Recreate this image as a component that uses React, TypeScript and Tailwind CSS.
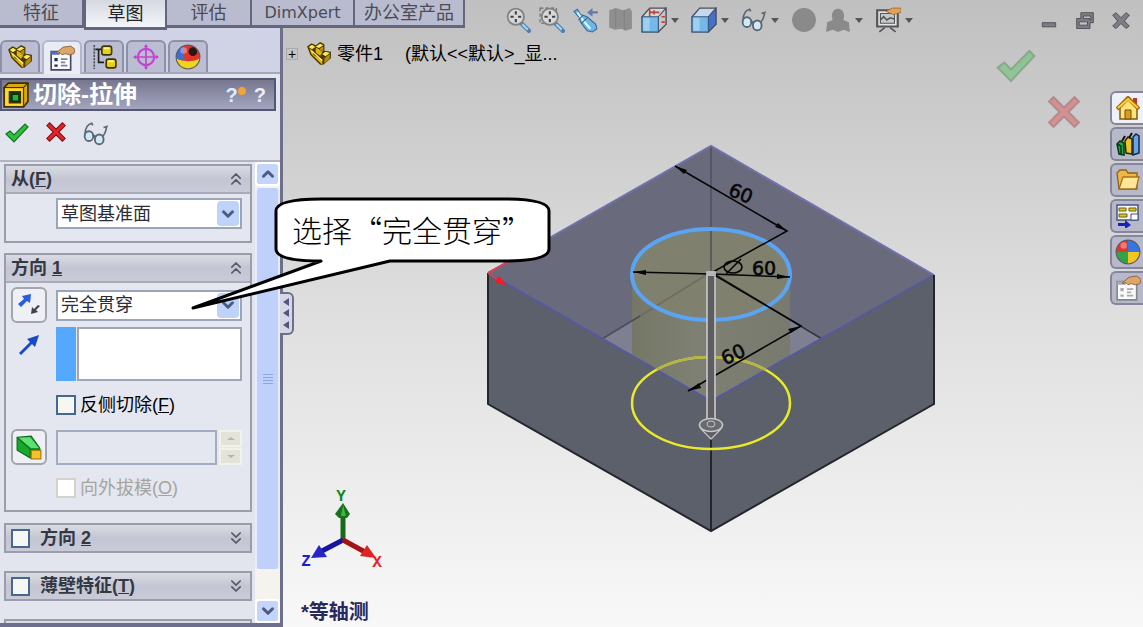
import { ReactNode } from "react";
import { ChevronDown, ChevronUp, ChevronsDown, ChevronsUp } from "lucide-react";

type IconProps = { children: ReactNode; className?: string };

function Icon({ children, className = "size-6" }: IconProps) {
  return (
    <svg viewBox="0 0 24 24" className={`shrink-0 ${className}`} fill="none" aria-hidden="true">
      {children}
    </svg>
  );
}

function PartIcon() {
  return (
    <Icon className="size-[26px]">
      <path d="M1 5l4-3 4 2 4-3 4 2v6l6 1v6l-7 6h-3L4 13z" fill="#4a3900" />
      <path d="M2.500 5.500l3-2 3 2-3 2zM9 5l4-2.500 3 1.500-4 2.500zM15 12l3-2 4 1-4 3z" fill="#ffe95a" />
      <path d="M3 7l3 2 1 4 8 4v5L5 12zM9 6l3 1.500 3 3-2 3-4-3z" fill="#e0b514" />
      <path d="M12.500 7l3.500-2v4l-2 2zM17 16l5-4v4l-5 5z" fill="#b58b08" />
      <path d="M5 9l10 9" stroke="#fff27a" strokeWidth="1.200" />
    </Icon>
  );
}

function PropertyIcon({ faded = false }: { faded?: boolean }) {
  return (
    <Icon className="size-[26px]">
      <path d="M2 6h18v17H2z" fill="#fafafc" stroke={faded ? "#85868c" : "#434861"} strokeWidth="1.5" />
      <path d="M2 6h8v3H2z" fill={faded ? "#aaa" : "#4a6fd0"} />
      <path d="M5 12h3v3H5zM5 18h3v2H5z" fill={faded ? "#aaa" : "#25315c"} />
      <path d="M11 13h6M11 19h6M11 16h4" stroke={faded ? "#aaa" : "#7d8494"} strokeWidth="1.5" />
      <path d="M7 7l6-5 7-1 4 3-1 4-4 1-4-1-3 1-2-2-3 1z" fill="#dca66b" stroke="#875b34" strokeWidth=".8" />
    </Icon>
  );
}

function ConfigIcon() {
  return (
    <Icon className="size-[26px]">
      <path d="M3 1v22" stroke="#555" strokeWidth="1.5" strokeDasharray="2 1" />
      <path d="M4 5h6M7 5v12h5" stroke="#1d1d1d" strokeWidth="1.5" />
      <rect x="10" y="2" width="9" height="8" rx="2" fill="#e8cf15" stroke="#3c3400" strokeWidth="1.5" />
      <rect x="14" y="14" width="9" height="8" rx="2" fill="#e8cf15" stroke="#3c3400" strokeWidth="1.5" />
      <path d="M12 4h5M16 16h5" stroke="#fff78a" strokeWidth="1.5" />
    </Icon>
  );
}

function TargetIcon() {
  return (
    <Icon className="size-[26px]">
      <circle cx="12" cy="12" r="7.5" stroke="#c344cf" strokeWidth="2" />
      <path d="M12 1v22M1 12h22" stroke="#c344cf" strokeWidth="1.6" />
      <path d="M12 0l2 3h-4zM12 24l2-3h-4zM0 12l3-2v4zM24 12l-3-2v4z" fill="#c344cf" />
    </Icon>
  );
}

function BallIcon({ task = false }: { task?: boolean }) {
  return (
    <Icon className="size-[26px]">
      <circle cx="12" cy="12" r="11" fill="#e0352a" />
      {task ? (
        <>
          <path d="M12 12V1a11 11 0 0 1 11 11z" fill="#3676e0" />
          <path d="M12 12h11a11 11 0 0 1-11 11z" fill="#f2c424" />
          <path d="M12 12v11A11 11 0 0 1 1 12z" fill="#31a544" />
        </>
      ) : (
        <>
          <path d="M1 13a11 11 0 0 0 22 0c-5 4-16 4-22 0z" fill="#eed321" />
          <path d="M1 13C1 6 5 2 8 2c-1 4 0 9 1 13-4 0-7-1-8-2z" fill="#3b6fd4" />
          <circle cx="16.500" cy="7" r="4" fill="#2e1512" />
        </>
      )}
      <circle cx="8" cy="6" r="3" fill="#fff" opacity=".35" />
      <circle cx="12" cy="12" r="11" stroke="#5a5a6e" />
    </Icon>
  );
}

function CutIcon() {
  return (
    <Icon className="size-[26px]">
      <path d="M1 5l4-4h18v17l-4 5H1z" fill="#dba90c" stroke="#3d3000" strokeWidth="1.6" />
      <path d="M1 5h18v18M19 5l4-4" stroke="#3d3000" />
      <path d="M2 6h16v16H2z" fill="#ffd92e" />
      <path d="M6 9h10v10H6z" fill="#063a10" stroke="#3d3000" strokeWidth="1.5" />
      <path d="M9 12h5v5H9z" fill="#2faf45" />
    </Icon>
  );
}

function CheckIcon({ className = "size-6" }: { className?: string }) {
  return (
    <Icon className={className}>
      <path d="M1 13l4-3 4 4L20 3l3 3L9 21z" fill="#2cc13a" stroke="#137522" strokeWidth="1.2" />
    </Icon>
  );
}

function CrossIcon({ className = "size-6" }: { className?: string }) {
  return (
    <Icon className={className}>
      <path d="M2 5l3-3 7 7 7-7 3 3-7 7 7 7-3 3-7-7-7 7-3-3 7-7z" fill="#e0262a" stroke="#8b1014" strokeWidth="1.2" />
    </Icon>
  );
}

function GlassesIcon({ className = "size-6" }: { className?: string }) {
  return (
    <Icon className={className}>
      <path d="M2 12C2 7 4 3 8 2l1 2M18 14c3-2 3-6 4-9l-3 1" stroke="#5a6671" strokeWidth="1.500" />
      <ellipse cx="5.500" cy="14" rx="4" ry="4.500" fill="#cfe9f8" stroke="#5a6671" strokeWidth="1.700" />
      <ellipse cx="15" cy="17" rx="4" ry="4.500" fill="#cfe9f8" stroke="#5a6671" strokeWidth="1.700" />
      <path d="M9 13l3 2" stroke="#5a6671" strokeWidth="2" />
    </Icon>
  );
}

function ZoomIcon({ area = false }: { area?: boolean }) {
  return (
    <Icon className="size-[26px]">
      {area && <path d="M1 1h15v14H1z" stroke="#666" strokeDasharray="3 2" />}
      <path d="M15 15l7 7" stroke="#4f7fae" strokeWidth="4" strokeLinecap="round" />
      <path d="M16 16l5 5" stroke="#a7d3f0" strokeWidth="2" />
      <circle cx="10" cy="9" r="7.500" fill="#d8d8da" stroke="#828387" strokeWidth="1.700" />
      <path d="M10 4v3M10 11v3M5 9h3M12 9h3" stroke="#444" strokeWidth="2" />
    </Icon>
  );
}

function PreviousViewIcon() {
  return (
    <Icon className="size-[26px]">
      <path d="M1 4l3-2 3 5 6 2 8 7 1 4-4 3-5-1-6-8-1-4z" fill="#71b5e6" stroke="#326c99" />
      <path d="M4 5l5 7 7 8" stroke="#d8f2ff" strokeWidth="2" />
      <path d="M9 8l-4 4M13 10l-5 5" stroke="#326c99" />
      <path d="M23 4h-5V1l-5 4 5 4V6h5z" fill="#5e7cb4" />
    </Icon>
  );
}

function CubeIcon({ section = false }: { section?: boolean }) {
  return (
    <Icon className="size-[26px]">
      <path d="M1 9l7-8h15v15l-7 7H1z" fill={section ? "#d6d6d6" : "#c6d8ee"} stroke="#494e58" strokeWidth="1.2" />
      <path d="M16 9l7-8v15l-7 7z" fill={section ? "#c8c4c4" : "#456fc9"} stroke="#494e58" />
      {section && <path d="M8 1v8M8 5h9M19 9h3M19 14h3M12 3v4" stroke="#b9423d" strokeWidth="1.500" />}
      <path d="M1 9h15v14H1z" fill="#76b8e8" stroke="#34597d" />
      <path d="M2 10h6v12H2z" fill="#b9def7" opacity=".6" />
    </Icon>
  );
}

function SceneSettingsIcon() {
  return (
    <Icon className="size-[26px]">
      <path d="M2 3h19v15H2z" fill="#e4e4e4" stroke="#555" strokeWidth="2" />
      <path d="M5 6h13v9H5z" fill="#c4c9cc" stroke="#555" />
      <path d="M5 12l3-3 3 3 3-2 4 1M9 19l-5 4M14 19l5 4" stroke="#555" strokeWidth="1.5" />
      <path d="M10 4l6-3h8v4l-7 2z" fill="#e2a256" stroke="#916333" strokeWidth=".7" />
    </Icon>
  );
}

function ToolButton({ label, menu = false, children }: { label: string; menu?: boolean; children: ReactNode }) {
  return (
    <button type="button" aria-label={label} className="flex h-7 items-center gap-1">
      {children}
      {menu && (
        <svg viewBox="0 0 8 5" className="h-[5px] w-2" aria-hidden="true">
          <path d="M0 0h8L4 5z" fill="#555560" />
        </svg>
      )}
    </button>
  );
}

const commandTabs = [
  { label: "特征", width: "w-[84px]" },
  { label: "草图", width: "w-[83px]", active: true },
  { label: "评估", width: "w-[85px]" },
  { label: "DimXpert", width: "w-[103px]" },
  { label: "办公室产品", width: "w-[110px]" },
];

function TopBar() {
  return (
    <header className="relative flex h-9 shrink-0 items-start">
      <div className="absolute top-0 left-0 h-9 w-[283px] border-r-[3px] border-[#6e6f8c] bg-[#d0d2e6]" />
      <nav className="relative flex shrink-0 text-lg leading-6">
        {commandTabs.map((tab) => (
          <button
            key={tab.label}
            type="button"
            className={`${tab.width} border-r-2 border-[#65667d] ${
              tab.active
                ? "h-[30px] border-b-3 border-l-2 bg-linear-to-b from-[#d5d9e0] to-[#f3f5f9] text-[#222]"
                : "h-[28px] border-b-3 bg-[#b9bbcf] text-[#4b4b55]"
            } ${tab.label === "DimXpert" ? "font-['DejaVu_Sans',sans-serif] text-base leading-6" : ""}`}
          >
            {tab.label}
          </button>
        ))}
      </nav>
      <div className="ml-10 flex items-center gap-2 pt-1.5">
        <ToolButton label="整屏显示全图"><ZoomIcon /></ToolButton>
        <ToolButton label="局部放大"><ZoomIcon area /></ToolButton>
        <ToolButton label="上一视图"><PreviousViewIcon /></ToolButton>
        <ToolButton label="剖面视图">
          <Icon className="size-[26px]">
            <path d="M2 3l6-2 7 2 6-2 2 3v16l-6 2-3-2-7 1-5-2z" fill="#8f8f8f" />
            <path d="M8 2v17M16 3v18" stroke="#828282" />
          </Icon>
        </ToolButton>
        <ToolButton label="视图定向" menu><CubeIcon section /></ToolButton>
        <div className="ml-1"><ToolButton label="显示样式" menu><CubeIcon /></ToolButton></div>
        <div className="ml-1"><ToolButton label="隐藏项目" menu><GlassesIcon className="size-[26px]" /></ToolButton></div>
        <div className="ml-1">
          <ToolButton label="编辑外观">
            <Icon className="size-[26px]"><circle cx="12" cy="12" r="11" fill="#8a8a8a" /></Icon>
          </ToolButton>
        </div>
        <ToolButton label="应用布景" menu>
          <Icon className="size-[26px]">
            <path d="M1 23l1-9 5-2c-4-14 14-14 10 0l5 2 1 9-6-2-5 2-5-2z" fill="#8a8a8a" />
          </Icon>
        </ToolButton>
        <div className="ml-1"><ToolButton label="视图设定" menu><SceneSettingsIcon /></ToolButton></div>
      </div>
      <div className="mt-[11px] mr-3 ml-auto flex gap-4">
        {[
          ["最小化", "M4 14h16v5H4z"],
          ["还原", "M7 2h15v12h-4v7H2V9h5zM10 6v3h8v2h1V6zM5 13v4h10v-4z"],
          ["关闭", "M2 5l4-3 6 6 6-6 4 3-6 7 6 6-4 3-6-6-6 6-4-3 6-6z"],
        ].map(([label, path]) => (
          <button key={label} type="button" aria-label={label}>
            <Icon className="size-5"><path d={path} fill="#7d7d85" stroke="#44444e" fillRule="evenodd" /></Icon>
          </button>
        ))}
      </div>
    </header>
  );
}

const managerTabs = [
  { label: "设计树", icon: <PartIcon /> },
  { label: "属性", icon: <PropertyIcon />, active: true },
  { label: "配置", icon: <ConfigIcon /> },
  { label: "尺寸", icon: <TargetIcon /> },
  { label: "外观", icon: <BallIcon /> },
];

function Dropdown({ label, value }: { label: string; value: string }) {
  return (
    <div className="relative min-w-0 flex-1">
      <select
        aria-label={label}
        defaultValue={value}
        className="block h-[31px] w-full appearance-none border-2 border-[#9ba5b8] bg-white pl-[3px] text-lg leading-6 text-[#2c2c38]"
      >
        <option>{value}</option>
      </select>
      <span className="pointer-events-none absolute inset-y-[3px] right-[3px] flex w-[22px] items-center justify-center rounded-sm bg-[#bfd2fa]">
        <ChevronDown className="size-[18px] text-[#4c5b82]" strokeWidth={4} />
      </span>
    </div>
  );
}

function GroupHeader({ title, hotkey, open = false, checkable = false }: { title: string; hotkey: ReactNode; open?: boolean; checkable?: boolean }) {
  const Chevron = open ? ChevronsUp : ChevronsDown;
  const text = (
    <span className="whitespace-pre">
      {title}
      {hotkey}
    </span>
  );
  return (
    <div className="flex h-[26px] items-center bg-linear-to-b from-[#dadce4] via-[#c3c6d2] to-[#c9ccd8] pr-1 pl-[5px] text-lg leading-6 font-bold text-[#343744]">
      {checkable ? (
        <label className="flex items-center gap-2.5">
          <input type="checkbox" className="size-[19px] appearance-none border-2 border-[#44698e] bg-[#f6f6f3]" />
          {text}
        </label>
      ) : (
        <h2>{text}</h2>
      )}
      <button type="button" aria-label={`${title} 展开或折叠`} className="ml-auto">
        <Chevron className="size-5 text-[#555865]" strokeWidth={2} />
      </button>
    </div>
  );
}

function Scrollbar() {
  return (
    <div className="flex w-[25px] shrink-0 flex-col gap-0.5 bg-[#f4f3ee]">
      <button type="button" aria-label="向上滚动" className="flex h-6 items-center justify-center rounded-sm border-2 border-white bg-[#c4d5fb]">
        <ChevronUp className="size-[18px] text-[#4c5b82]" strokeWidth={4} />
      </button>
      <div className="mb-7 flex flex-1 flex-col items-center justify-center gap-0.5 rounded-sm border-x-2 border-[#e5ecff] bg-[#bfd1fb]">
        <span className="h-px w-2.5 bg-[#8ba6e0]" />
        <span className="h-px w-2.5 bg-[#8ba6e0]" />
        <span className="h-px w-2.5 bg-[#8ba6e0]" />
        <span className="h-px w-2.5 bg-[#8ba6e0]" />
      </div>
      <button type="button" aria-label="向下滚动" className="flex h-6 items-center justify-center rounded-sm border-2 border-white bg-[#c4d5fb]">
        <ChevronDown className="size-[18px] text-[#4c5b82]" strokeWidth={4} />
      </button>
    </div>
  );
}

function PropertyManager() {
  return (
    <aside className="relative flex w-[283px] shrink-0 flex-col border-r-[3px] border-b-4 border-[#6e6f8c] bg-[#e2e4ee]">
      <nav className="flex h-[38px] items-end gap-0.5 border-b-2 border-[#a5a7bc] bg-[#d0d2e6]">
        {managerTabs.map((tab) => (
          <button
            key={tab.label}
            type="button"
            aria-label={tab.label}
            className={`flex w-10 items-center justify-center rounded-t-md border-2 border-b-0 ${
              tab.active ? "-mb-0.5 h-[34px] border-[#b4b6ca] bg-[#e9ebf5]" : "h-8 border-[#8e90a8] bg-[#bbbdd2]"
            }`}
          >
            {tab.icon}
          </button>
        ))}
      </nav>
      <div className="mt-1 mr-1 flex h-[33px] items-center border-2 border-[#565673] bg-linear-to-b from-[#77788f] to-[#a3a4bf] pr-2 pl-px text-white">
        <CutIcon />
        <h1 className="ml-1 text-2xl leading-7 font-bold">切除-拉伸</h1>
        <button type="button" aria-label="新增功能" className="ml-auto flex items-start text-xl leading-6 font-bold text-[#dcecff]">
          ?<span className="mt-1 size-2 rounded-full bg-[#f2a43a]" />
        </button>
        <button type="button" aria-label="帮助" className="ml-2 text-xl leading-6 font-bold text-[#eeeef2]">?</button>
      </div>
      <div className="flex h-[51px] items-start gap-4 border-b-2 border-[#b2b4c2] pt-2.5 pl-[5px]">
        <button type="button" aria-label="确定"><CheckIcon /></button>
        <button type="button" aria-label="取消"><CrossIcon className="size-[22px]" /></button>
        <button type="button" aria-label="细节预览"><GlassesIcon className="size-[26px]" /></button>
      </div>
      <div className="flex min-h-0 flex-1">
        <div className="min-w-0 flex-1 overflow-hidden pt-0.5 pr-[3px] pl-1">
          <section className="mb-2.5 border-2 border-[#9b9dab] bg-[#e5e7f0]">
            <GroupHeader title="从" hotkey={<>(<u>F</u>)</>} open />
            <div className="flex border-t-2 border-[#a9abb9] pt-1 pr-2 pb-3 pl-[50px]">
              <Dropdown label="开始条件" value="草图基准面" />
            </div>
          </section>
          <section className="mb-[11px] border-2 border-[#9b9dab] bg-[#e5e7f0]">
            <GroupHeader title="方向 " hotkey={<u>1</u>} open />
            <div className="flex flex-col border-t-2 border-[#a9abb9] pt-1 pr-2 pb-2.5 pl-[5px]">
              <div className="flex items-center gap-[9px]">
                <button type="button" aria-label="反向" className="flex size-9 shrink-0 items-center justify-center rounded-md border-2 border-[#a3a4ac] bg-[#eef0f6]">
                  <Icon>
                    <path d="M1 11L7 6 5 3l9-2-1 9-3-2-6 6z" fill="#2a5be0" />
                    <path d="M23 13l-4 4 2 2-7 2 1-7 2 2 4-4z" fill="#414450" />
                  </Icon>
                </button>
                <Dropdown label="终止条件" value="完全贯穿" />
              </div>
              <div className="mt-1 flex h-[54px] items-start gap-[9px]">
                <button type="button" aria-label="拉伸方向" className="flex size-9 shrink-0 items-center justify-center">
                  <Icon><path d="M2 20L13 9l-3-3 12-4-4 12-3-3L4 22z" fill="#1648cd" /></Icon>
                </button>
                <div className="flex h-full min-w-0 flex-1">
                  <span className="mr-px w-5 shrink-0 bg-[#54a9ff]" />
                  <textarea aria-label="方向参考" className="h-full w-0 min-w-0 flex-1 resize-none border-2 border-[#a2a5b4] bg-white" />
                </div>
              </div>
              <label className="mt-3 ml-[45px] flex items-center gap-1 text-lg leading-6 text-black">
                <input type="checkbox" className="size-5 appearance-none border-2 border-[#44698e] bg-[#f6f6f3]" />
                <span>反侧切除(<u>F</u>)</span>
              </label>
              <div className="mt-3 flex items-center gap-[9px]">
                <button type="button" aria-label="拔模开关" className="flex size-9 shrink-0 items-center justify-center rounded-md border-2 border-[#a3a4ac] bg-[#eef0f6]">
                  <Icon className="size-[26px]">
                    <path d="M1 3l13-1 8 11v9H13L1 15z" fill="#18a82c" stroke="#0c6a1e" />
                    <path d="M2 3.500L13 3l8 10h-7z" fill="#5fe071" />
                    <path d="M1 3l12 11v8M13 14h9" stroke="#0c6a1e" />
                    <path d="M14 15h9v8h-9z" fill="#f6c229" stroke="#a27308" />
                  </Icon>
                </button>
                <div className="flex min-w-0 flex-1 gap-0.5">
                  <input type="text" disabled aria-label="拔模角度" className="h-[35px] w-0 flex-1 border-2 border-[#a3adbf] bg-[#e4e6f0]" />
                  <div className="flex w-[23px] flex-col gap-px">
                    {["M0 3h8L4 0z", "M0 0h8L4 3z"].map((path, i) => (
                      <button key={path} type="button" disabled aria-label={i ? "减小" : "增大"} className="flex flex-1 items-center justify-center border-2 border-[#f3f2ea] bg-[#e4e3da]">
                        <svg viewBox="0 0 8 3" className="h-[3px] w-2"><path d={path} fill="#b7b5a8" /></svg>
                      </button>
                    ))}
                  </div>
                </div>
              </div>
              <label className="mt-[11px] ml-[45px] flex items-center gap-1 text-lg leading-6 text-[#a5a59b]">
                <input type="checkbox" disabled className="size-5 appearance-none border-2 border-[#d3d2c9] bg-white" />
                <span>向外拔模(<u>O</u>)</span>
              </label>
            </div>
          </section>
          <section className="mb-[18px] border-2 border-[#9b9dab]">
            <GroupHeader title="方向 " hotkey={<u>2</u>} checkable />
          </section>
          <section className="mb-[18px] border-2 border-[#9b9dab]">
            <GroupHeader title="薄壁特征" hotkey={<>(<u>T</u>)</>} checkable />
          </section>
          <div className="h-8 border-2 border-[#9b9dab] bg-[#dadce4]" />
        </div>
        <Scrollbar />
      </div>
      <button type="button" aria-label="折叠面板" className="absolute top-64 -right-[14px] flex h-[43px] w-[14px] flex-col items-center justify-around rounded-r-md border-2 border-l-0 border-[#6e6f8c] bg-[#d5d7e6] py-0.5">
        {[0, 1, 2].map((i) => (
          <svg key={i} viewBox="0 0 6 8" className="h-2 w-1.5"><path d="M6 0v8L0 4z" fill="#55567c" /></svg>
        ))}
      </button>
    </aside>
  );
}

// Model drawing: extruded block, cut preview, sketch dimensions and the axis triad
function ModelScene() {
  return (
    <svg viewBox="283 36 860 591" preserveAspectRatio="xMinYMin meet" className="absolute inset-0 size-full" role="img" aria-label="零件1">
      <defs>
        <clipPath id="top-face"><path d="M711 146L934 275 711 401 488 273z" /></clipPath>
        <linearGradient id="cut-body" x1="632" x2="790" y1="0" y2="0" gradientUnits="userSpaceOnUse">
          <stop offset="0" stopColor="#757766" />
          <stop offset="0.4" stopColor="#7e8073" />
          <stop offset="1" stopColor="#787a6d" />
        </linearGradient>
      </defs>
      <path d="M488 273L711 401V531L488 404zM711 401L934 275V404L711 531z" fill="#5c606b" />
      <path d="M711 146L934 275 711 401 488 273z" fill="#696b7c" />
      <path d="M711 272L822 339 711 401 602 339z" fill="#7f7f92" />
      <g clipPath="url(#top-face)">
        <path d="M632 274a79 46 0 0 1 158 0V403a79 46 0 0 1-158 0z" fill="url(#cut-body)" />
        <ellipse cx="711" cy="274" rx="79" ry="46" fill="#7f806e" />
      </g>
      <path d="M711 146V272" stroke="#4e5059" strokeWidth="1.5" />
      <path d="M711 272L640 316" stroke="#6c6d62" strokeWidth="1.5" />
      <path d="M640 316L602 339" stroke="#4a4c56" strokeWidth="1.5" />
      <path d="M711 272L822 339" stroke="#34353d" strokeWidth="1.5" />
      <path d="M488 273L711 146 934 275" stroke="#7072ac" strokeWidth="2" fill="none" />
      <path d="M488 273L711 401 934 275" stroke="#5658a0" strokeWidth="2" fill="none" />
      <path d="M488 273V404L711 531 934 404V275M711 430V531" stroke="#24262d" strokeWidth="2" fill="none" />
      <ellipse cx="711" cy="403" rx="79" ry="46" fill="none" stroke="#e9ea29" strokeWidth="2.500" />
      <ellipse cx="711" cy="403" rx="79" ry="46" fill="none" stroke="#b4b34c" strokeWidth="2.500" clipPath="url(#top-face)" />
      <ellipse cx="711" cy="274.500" rx="79" ry="45.500" fill="none" stroke="#5aa4f3" strokeWidth="4" />
      <g stroke="#060606" strokeWidth="1.600" fill="none">
        <path d="M675 166L787 231 711 273 801 326 688 391" />
        <path d="M633 272L711 274 790 277" />
        <ellipse cx="733" cy="267" rx="9" ry="6" />
        <path d="M726 274l15-15" />
      </g>
      <g fill="#060606">
        <path d="M675 166l12 4-3 4zM787 231l-12-4 3-4zM633 272l13-2v5zM790 277l-13-3v5zM801 326l-10 7-3-4zM688 391l11-8 2 5z" />
      </g>
      <g fill="#060606" fontFamily="'DejaVu Sans', sans-serif" fontSize="19" textAnchor="middle" stroke="#060606" strokeWidth=".6">
        <text x="741" y="200" transform="rotate(22 741 193)">60</text>
        <text x="764" y="275">60</text>
        <text x="733" y="361" transform="rotate(-25 733 354)">60</text>
      </g>
      <path d="M707 272h8v148h-8z" fill="#5e5e61" stroke="#cacacc" strokeWidth="1.600" />
      <path d="M707 271h8v5h-8z" fill="#b7b7b7" />
      <path d="M702 430h18l-9 9z" fill="#5e5e61" stroke="#c5c5c8" strokeWidth="1.300" />
      <ellipse cx="711" cy="425" rx="11.500" ry="6.500" fill="#696a6f" stroke="#c5c5c8" strokeWidth="1.600" />
      <ellipse cx="711" cy="424" rx="4" ry="3" stroke="#c5c5c8" fill="none" />
      <path d="M488 273l22-12M488 273l12 8" stroke="#d34454" strokeWidth="2" />
      <path d="M495 282l4-6 8 10z" fill="#fa1821" />
      <path d="M343 541V515" stroke="#176a18" strokeWidth="5" />
      <path d="M343 503l-8 11 4 4h8l3-4z" fill="#1b701d" />
      <path d="M343 505l-2 11h5z" fill="#3bb941" />
      <path d="M343 540l-23 12" stroke="#1714a2" strokeWidth="5" />
      <path d="M311 558l8-13 8 12z" fill="#2625c7" />
      <path d="M343 540l22 12" stroke="#a91213" strokeWidth="5" />
      <path d="M376 558l-9-13-7 11z" fill="#df2323" />
      <g fontFamily="'Liberation Mono', monospace" fontSize="16" fontWeight="700" textAnchor="middle">
        <text x="341" y="501" fill="#16851e">Y</text>
        <text x="377" y="567" fill="#e42424">X</text>
        <text x="306" y="566" fill="#1d1bd1">Z</text>
      </g>
    </svg>
  );
}

const taskTabs = [
  {
    label: "资源",
    icon: (
      <Icon>
        <path d="M17 2h4v8h-4z" fill="#be382b" />
        <path d="M4 11v12h17V11l-9-8z" fill="#ffe47b" stroke="#795b15" strokeWidth="1.500" />
        <path d="M1 13L12 2l11 11" stroke="#a16c0c" strokeWidth="4" />
        <path d="M2 12L12 3l10 9" stroke="#ffd03b" strokeWidth="2" />
        <path d="M9 14h6v9H9z" fill="#d99c1e" stroke="#70500a" />
      </Icon>
    ),
  },
  {
    label: "设计库",
    icon: (
      <Icon>
        <path d="M1 12l3-3 4 2v12l-5-1zM1 12l4 2v9" fill="#25a647" stroke="#063815" strokeWidth="1.500" />
        <path d="M9 9l3-4 4 2v15l-6-1z" fill="#ecc525" stroke="#312703" strokeWidth="1.500" />
        <path d="M17 5l3-3 3 2v17l-6 2z" fill="#6aa2e4" stroke="#102a54" strokeWidth="1.500" />
        <path d="M6 9l3-5M13 6l3-5" stroke="#111" strokeWidth="2" />
      </Icon>
    ),
  },
  {
    label: "文件探索器",
    icon: (
      <Icon>
        <path d="M1 5l3-3h6l2 3h9v16H3z" fill="#ebb749" stroke="#916114" strokeWidth="1.300" />
        <path d="M3 21L7 9h16l-3 12z" fill="#ffe597" stroke="#a5731a" strokeWidth="1.300" />
      </Icon>
    ),
  },
  {
    label: "视图调色板",
    icon: (
      <Icon>
        <path d="M1 1h21v15H1z" fill="#f3f4fb" stroke="#465582" strokeWidth="1.500" />
        <path d="M3 4h7v3H3zM13 4h7v3h-7zM3 10h8v3H3z" fill="#dec51c" stroke="#716307" />
        <path d="M15 10h7v6h-7z" fill="#fff" stroke="#465582" />
        <path d="M2 19h7v-3l6 5-6 4v-3H2z" fill="#1522bd" />
      </Icon>
    ),
  },
  { label: "外观与布景", icon: <BallIcon task /> },
  { label: "自定义属性", icon: <PropertyIcon faded /> },
];

function Viewport() {
  return (
    <main className="relative flex min-w-0 flex-1">
      <ModelScene />
      <div className="relative flex flex-1 flex-col justify-between">
        <div className="flex items-center pt-1 pl-[3px] text-lg leading-7 text-black">
          <button type="button" aria-label="展开" className="flex size-3 items-center justify-center border border-[#aaa] text-sm leading-none">+</button>
          <span className="ml-2"><PartIcon /></span>
          <span className="ml-[5px]">零件1</span>
          <span className="ml-[22px]">(默认&lt;&lt;默认&gt;_显...</span>
        </div>
        <p className="pb-px pl-[18px] text-xl leading-7 font-bold text-[#29275c]">*等轴测</p>
      </div>
      <div className="relative mr-7 flex flex-col pt-2.5 opacity-35">
        <button type="button" aria-label="确认" className="-ml-[50px] self-start"><CheckIcon className="size-10" /></button>
        <button type="button" aria-label="放弃" className="mt-2"><CrossIcon className="size-9" /></button>
      </div>
      <nav className="relative flex w-[33px] flex-col gap-0.5 pt-[55px]">
        {taskTabs.map((tab, i) => (
          <button
            key={tab.label}
            type="button"
            aria-label={tab.label}
            className={`flex h-[34px] items-center justify-center rounded-l-md border-2 border-r-0 border-[#85869c] ${i === 0 ? "bg-[#f0f1f7]" : "bg-[#b7b9ca]"}`}
          >
            {tab.icon}
          </button>
        ))}
      </nav>
    </main>
  );
}

function Callout() {
  return (
    <div className="pointer-events-none absolute top-[197px] left-[190px] h-[114px] w-[362px]">
      <svg viewBox="190 197 362 114" className="absolute inset-0 size-full" aria-hidden="true">
        <path
          d="M321 261Q276 261 276 249V211Q276 199 321 199H504Q549 199 549 211V249Q549 261 504 261H390L193 308 321 261z"
          fill="#fff"
          stroke="#000"
          strokeWidth="3"
          strokeLinejoin="round"
        />
      </svg>
      <p className="relative pt-3 pl-[102px] font-['Noto_Sans_CJK_SC',sans-serif] text-3xl leading-10 font-light whitespace-nowrap text-black">
        选择“完全贯穿”
      </p>
    </div>
  );
}

export default function App() {
  return (
    <div
      lang="zh-CN"
      className="relative flex h-screen flex-col overflow-hidden bg-linear-to-b from-[#c0c0c0] via-[#dfdfdf] to-[#f8f8f8] font-['Liberation_Sans','Noto_Sans_CJK_SC',sans-serif]"
    >
      <TopBar />
      <div className="flex min-h-0 flex-1">
        <PropertyManager />
        <Viewport />
      </div>
      <Callout />
    </div>
  );
}
